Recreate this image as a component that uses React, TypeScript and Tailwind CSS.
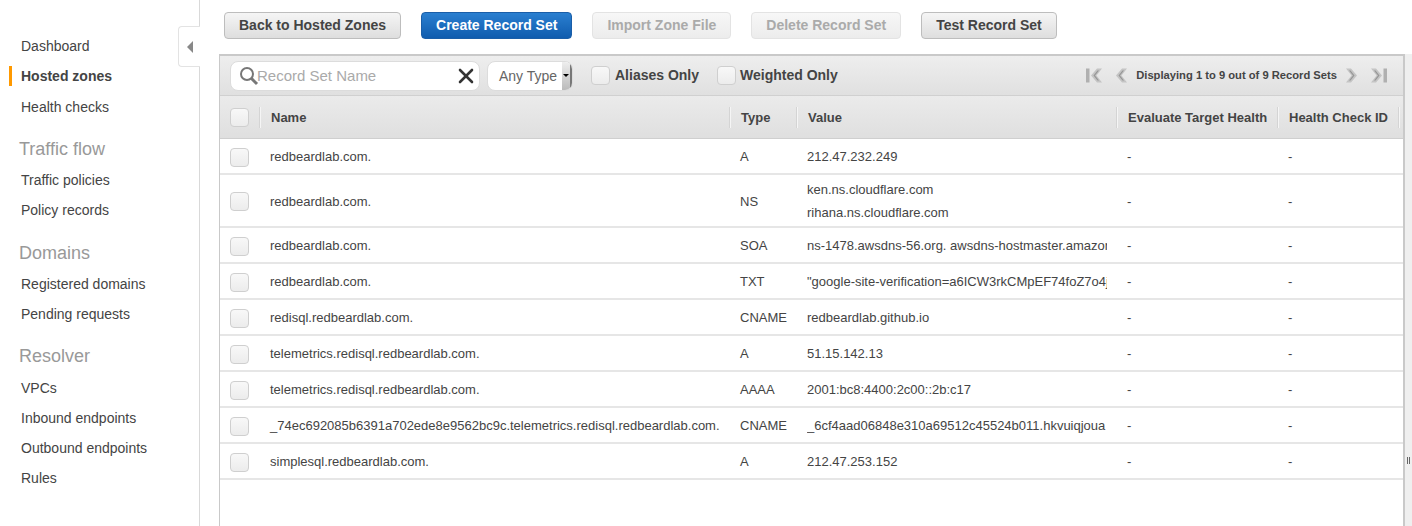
import { X } from 'lucide-react';

const rows = [
  { name: 'redbeardlab.com.', type: 'A', value: ['212.47.232.249'] },
  { name: 'redbeardlab.com.', type: 'NS', value: ['ken.ns.cloudflare.com', 'rihana.ns.cloudflare.com'] },
  { name: 'redbeardlab.com.', type: 'SOA', value: ['ns-1478.awsdns-56.org. awsdns-hostmaster.amazon'] },
  { name: 'redbeardlab.com.', type: 'TXT', value: ['"google-site-verification=a6ICW3rkCMpEF74foZ7o4j'] },
  { name: 'redisql.redbeardlab.com.', type: 'CNAME', value: ['redbeardlab.github.io'] },
  { name: 'telemetrics.redisql.redbeardlab.com.', type: 'A', value: ['51.15.142.13'] },
  { name: 'telemetrics.redisql.redbeardlab.com.', type: 'AAAA', value: ['2001:bc8:4400:2c00::2b:c17'] },
  { name: '_74ec692085b6391a702ede8e9562bc9c.telemetrics.redisql.redbeardlab.com.', type: 'CNAME', value: ['_6cf4aad06848e310a69512c45524b011.hkvuiqjoua'] },
  { name: 'simplesql.redbeardlab.com.', type: 'A', value: ['212.47.253.152'] },
];

const nav = [
  { items: ['Dashboard', 'Hosted zones', 'Health checks'], top: '', title_h: '' },
  { title: 'Traffic flow', items: ['Traffic policies', 'Policy records'], top: 'mt-[13px]', title_h: 'h-[31px] leading-[31px]' },
  { title: 'Domains', items: ['Registered domains', 'Pending requests'], top: 'mt-[13px]', title_h: 'h-[31px] leading-[31px]' },
  { title: 'Resolver', items: ['VPCs', 'Inbound endpoints', 'Outbound endpoints', 'Rules'], top: 'mt-[11px]', title_h: 'h-[33px] leading-[33px]' },
];

const gridCols = 'grid grid-cols-[40px_470px_67px_320px_161px_121px_4px]';

function Checkbox({ className = '' }: { className?: string }) {
  return <span className={`block w-[19px] h-[19px] rounded-[4px] border border-[#cfcfcf] bg-gradient-to-b from-[#f8f8f8] to-[#ececec] ${className}`} />;
}

function Btn({ label, kind = 'normal' }: { label: string; kind?: 'normal' | 'primary' | 'disabled' }) {
  const styles = {
    normal: 'border-[#bdbdbd] bg-gradient-to-b from-[#f5f5f5] to-[#dedede] text-[#444]',
    primary: 'border-[#1a5ea8] bg-gradient-to-b from-[#2a7fd0] to-[#0f5cae] text-white',
    disabled: 'border-[#e3e3e3] bg-gradient-to-b from-[#f7f7f7] to-[#ececec] text-[#aaa]',
  };
  return (
    <button className={`h-[27px] px-[14px] rounded-[4px] border text-[14px] font-bold whitespace-nowrap ${styles[kind]}`}>
      {label}
    </button>
  );
}

function HeadCell({ label }: { label: string }) {
  return (
    <div className="flex items-center h-full">
      <span className="-ml-[1px] w-[2px] h-[21px] bg-[#f5f5f5] border-l border-[#d4d4d4] shrink-0" />
      <span className="pl-[10px] pt-[2px] text-[13px] font-bold text-[#444] whitespace-nowrap">{label}</span>
    </div>
  );
}

// chunky grey chevrons of the pager, the right hand ones are mirrored
function PagerIcon({ dir, bar }: { dir: 'left' | 'right'; bar?: boolean }) {
  const flip = dir === 'right';
  return (
    <svg width={bar ? 16 : 11} height="15" viewBox={bar ? '0 0 16 15' : '5 0 11 15'} className="shrink-0">
      <g transform={flip ? `scale(-1 1) translate(${bar ? -16 : -21} 0)` : undefined}>
        {bar && <rect x="0" y="0.5" width="3.5" height="14" fill="#b0b0b0" />}
        <path d="M11 0.5 L5 7.5 L11 14.5 L16 14.5 L10.5 7.5 L16 0.5 Z" fill="#c4c4c4" />
        <path d="M11.5 2.5 L7.5 7.5 L11.5 12.5 L13 12.5 L9 7.5 L13 2.5 Z" fill="#969696" />
      </g>
    </svg>
  );
}

export default function App() {
  return (
    <div className="flex w-[1412px] h-[526px] overflow-hidden bg-white font-['Liberation_Sans',Arial,sans-serif] text-[#444]">
      {/* sidebar */}
      <aside className="relative w-[200px] h-full shrink-0 border-r border-[#d9d9d9] pt-[31px]">
        {nav.map((group, i) => (
          <div key={i} className={group.top}>
            {group.title && (
              <div className={`pl-[19px] text-[18px] text-[#999] ${group.title_h}`}>{group.title}</div>
            )}
            {group.items.map(item => (
              <div
                key={item}
                className={`relative pl-[21px] h-[30px] leading-[30px] text-[14px] ${item === 'Hosted zones' ? 'font-bold' : ''} ${item === 'Health checks' ? 'pt-[1px]' : ''}`}
              >
                {item === 'Hosted zones' && <span className="absolute left-[9px] top-[5px] w-[3px] h-[20px] bg-[#f90]" />}
                {item}
              </div>
            ))}
          </div>
        ))}
        <div className="absolute right-[-1px] top-[26px] w-[22px] h-[41px] flex items-center justify-center bg-white border border-r-0 border-[#e3e3e3] rounded-l-[4px]">
          <span className="w-0 h-0 border-y-[6px] border-y-transparent border-r-[6px] border-r-[#888]" />
        </div>
      </aside>

      {/* main */}
      <main className="flex-1 min-w-0 pl-[19px]">
        <div className="flex items-center gap-[20px] h-[54px] pl-[5px] pb-[4px]">
          <Btn label="Back to Hosted Zones" />
          <Btn label="Create Record Set" kind="primary" />
          <Btn label="Import Zone File" kind="disabled" />
          <Btn label="Delete Record Set" kind="disabled" />
          <Btn label="Test Record Set" />
        </div>

        <div className="flex h-[472px]">
          <div className="w-[1184px] shrink-0 border-l border-t-2 border-[#c9c9c9]">
            {/* filter bar */}
            <div className="flex items-center h-[40px] pl-[10px] pr-[16px] bg-gradient-to-b from-[#eeeeee] to-[#e0e0e0] border-b border-[#d0d0d0]">
              <div className="relative flex items-center w-[250px] h-[30px] bg-white rounded-[8px] border border-[#dcdcdc]">
                <svg width="20" height="20" viewBox="0 0 20 20" className="ml-[8px] shrink-0">
                  <circle cx="8" cy="8" r="6" fill="none" stroke="#777" strokeWidth="2" />
                  <path d="M12.5 12.5 L18 18" stroke="#777" strokeWidth="3" />
                </svg>
                <span className="-ml-[2px] pt-[1px] text-[15px] text-[#aaa]">Record Set Name</span>
                <X size={24} strokeWidth={2.6} className="absolute right-[1px] text-[#333]" />
              </div>
              <div className="relative ml-[7px] flex items-center w-[86px] h-[30px] bg-white rounded-[8px] border border-[#dcdcdc] pl-[11px] overflow-hidden">
                <span className="pt-[1px] text-[14px] text-[#666] whitespace-nowrap">Any Type</span>
                <span className="absolute right-0 top-0 w-[10px] h-full flex items-center justify-center bg-gradient-to-b from-[#eee] to-[#bbb] border-r-2 border-[#777]">
                  <span className="w-0 h-0 border-x-[3px] border-x-transparent border-t-[3px] border-t-black" />
                </span>
              </div>
              <Checkbox className="ml-[18px]" />
              <span className="ml-[5px] text-[14px] font-bold">Aliases Only</span>
              <Checkbox className="ml-[18px]" />
              <span className="ml-[4px] text-[14px] font-bold">Weighted Only</span>
              <div className="ml-auto flex items-center">
                <PagerIcon dir="left" bar />
                <span className="w-[14px]" />
                <PagerIcon dir="left" />
                <span className="ml-[9px] text-[11.2px] font-bold whitespace-nowrap">Displaying 1 to 9 out of 9 Record Sets</span>
                <span className="ml-[9px]"><PagerIcon dir="right" /></span>
                <span className="ml-[14px]"><PagerIcon dir="right" bar /></span>
              </div>
            </div>

            {/* table header */}
            <div className={`${gridCols} h-[43px] bg-gradient-to-b from-[#ebebeb] to-[#dfdfdf] border-b border-[#cfcfcf]`}>
              <div className="flex items-center pl-[10px]"><Checkbox /></div>
              <HeadCell label="Name" />
              <HeadCell label="Type" />
              <HeadCell label="Value" />
              <HeadCell label="Evaluate Target Health" />
              <HeadCell label="Health Check ID" />
              <HeadCell label="" />
            </div>

            {rows.map((r, i) => (
              <div key={i} className={`${gridCols} items-center border-b-2 border-[#e6e6e6] pt-[2px] text-[13px] ${r.value.length > 1 ? 'h-[53px]' : 'h-[36px]'}`}>
                <div className="pl-[10px]"><Checkbox /></div>
                <div className="pl-[10px] whitespace-nowrap">{r.name}</div>
                <div className="pl-[10px]">{r.type}</div>
                <div className={`pl-[10px] pr-[10px] overflow-hidden ${r.value.length > 1 ? '-mt-[2px]' : ''}`}>
                  {r.value.map(v => (
                    <div key={v} className={`whitespace-nowrap overflow-hidden ${r.value.length > 1 ? 'leading-[23px]' : ''}`}>{v}</div>
                  ))}
                </div>
                <div className="pl-[10px]">-</div>
                <div className="pl-[10px]">-</div>
                <div />
              </div>
            ))}
          </div>

          {/* resize strip */}
          <div className="relative flex-1 bg-[#efefef] border-l-2 border-[#c9c9c9]">
            <div className="absolute left-[2px] top-[403px] flex gap-[1px]">
              <span className="w-[1px] h-[7px] bg-[#666]" />
              <span className="w-[1px] h-[7px] bg-[#666]" />
            </div>
          </div>
        </div>
      </main>
    </div>
  );
}
